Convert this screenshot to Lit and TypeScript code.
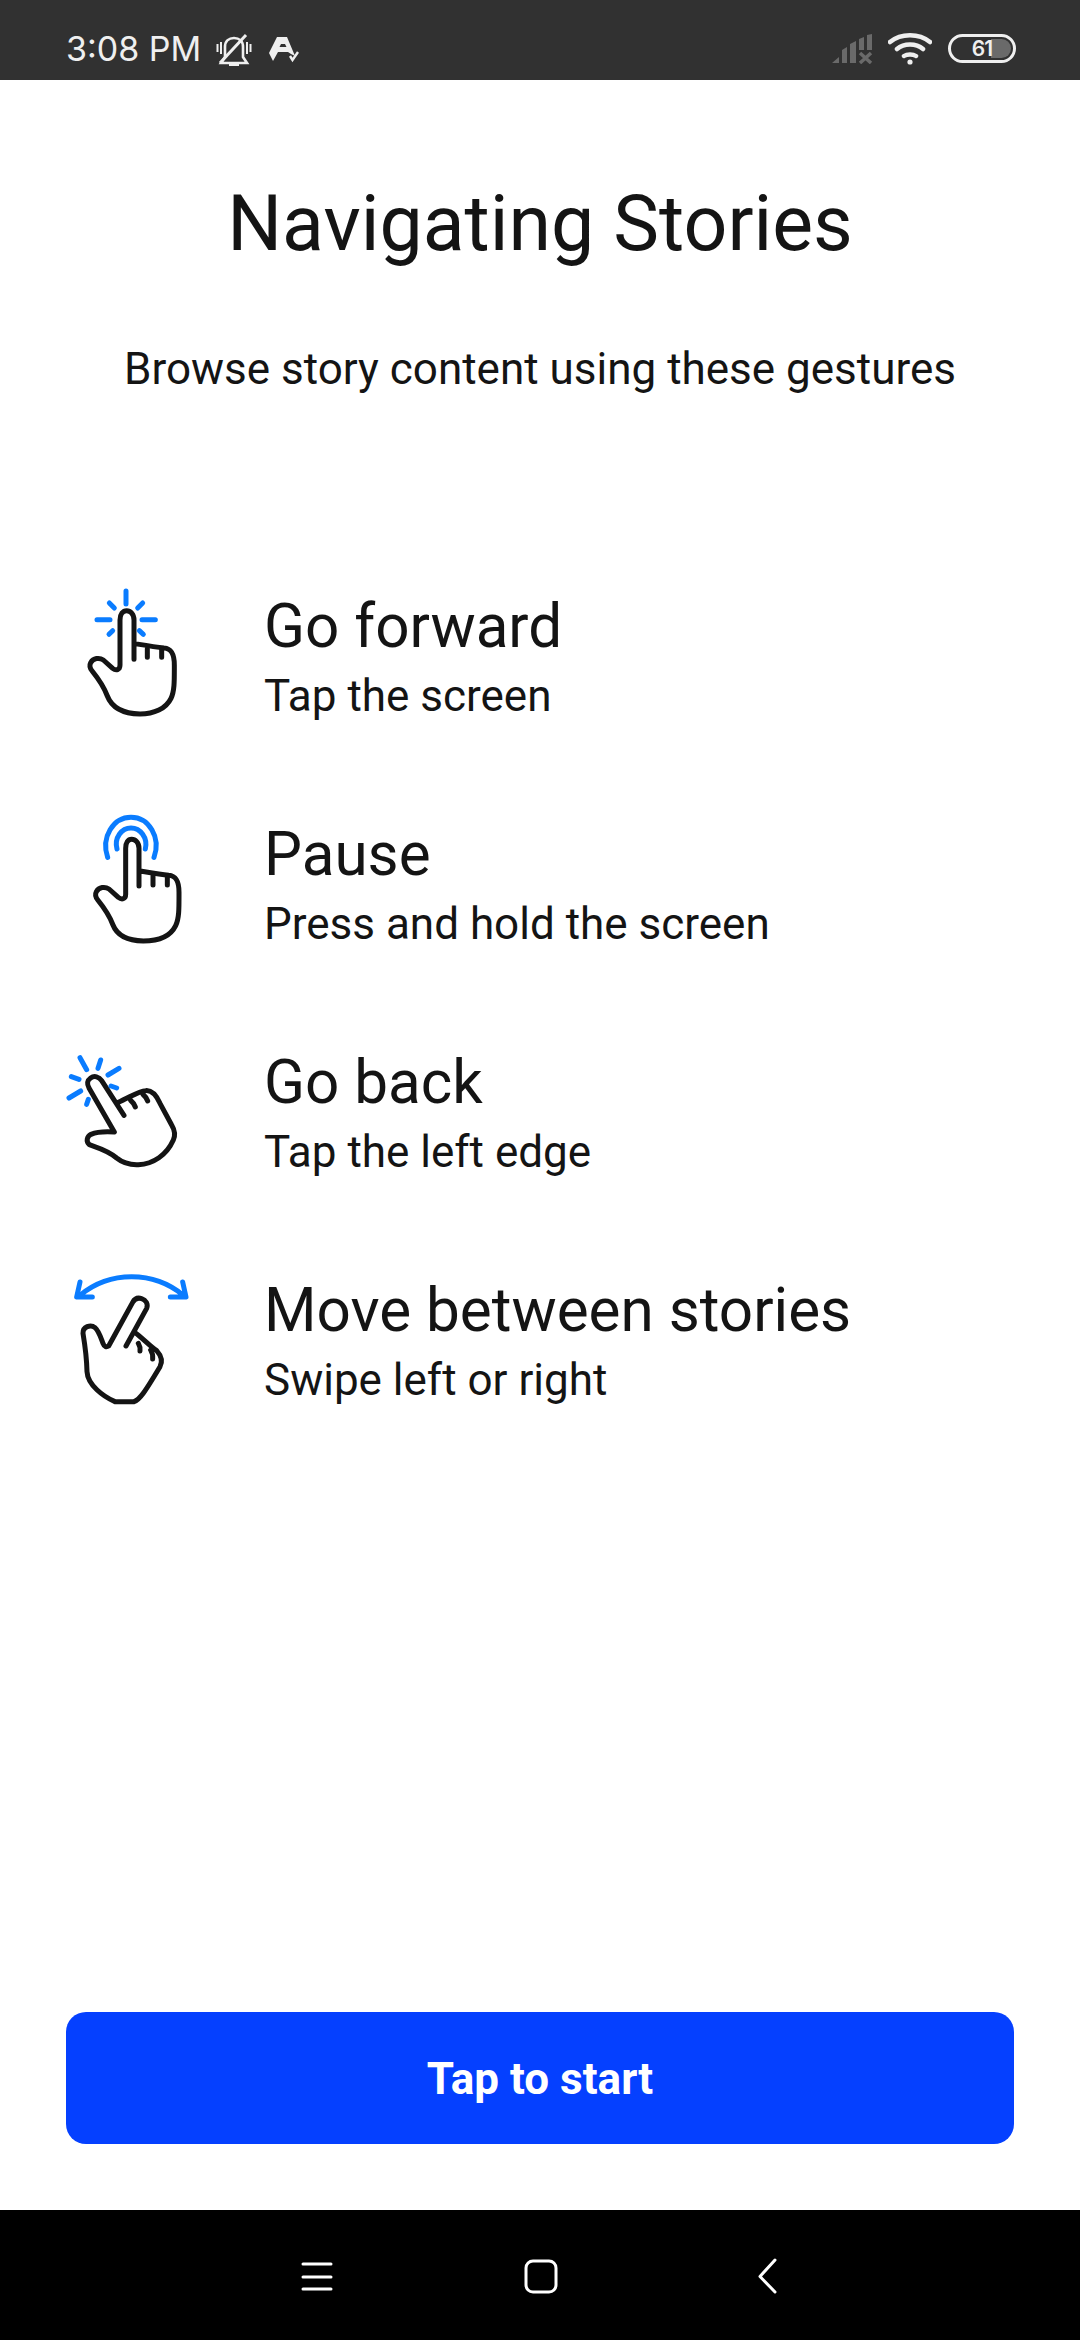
import { LitElement, html, css, svg } from "lit";
import { customElement } from "lit/decorators.js";

const hand1 = svg`<path d="M222 268V150C222 132 211 122 200 122S180 132 180 150V285C180 300 168 303 158 295L130 270C118 262 100 264 92 278C87 287 90 295 97 304C118 330 132 352 142 378C156 414 190 431 240 432C282 432 318 416 333 385C344 362 343 330 343 285C343 252 335 236 312 234C285 231 255 226 224 221"/><path d="M262 236V262M305 236V262"/>`;

const hand2 = svg`<path d="M237 258V145C237 128 226 118 215 118S197 128 197 145V283C197 298 185 300 175 292L147 267C135 259 117 261 109 275C104 284 107 292 114 301C135 327 149 349 159 375C173 411 207 422 250 423C296 423 332 408 347 377C358 354 357 322 357 277C357 244 349 228 326 226C299 223 270 218 239 213"/><path d="M279 228V255M322 228V255"/>`;

const hand3 = svg`<path d="M207 226L140 122C132 110 118 106 107 114S95 130 102 144L178 276C150 274 125 276 108 283C96 289 92 304 103 314C125 322 160 332 185 354C205 370 228 375 250 374C295 372 335 345 355 300C362 285 360 272 350 255L315 190C305 168 290 150 272 152C250 153 225 172 188 188"/><path d="M226 180C233 186 238 193 241 201M263 162C270 168 275 175 278 183"/>`;

const hand4 = svg`<path d="M198 258L260 145C265 132 258 120 245 116C233 112 224 116 218 127L146 258C140 262 133 261 129 250C122 232 116 212 105 203C92 192 68 200 69 220C74 250 80 290 81 335C83 375 130 410 165 425H222C240 418 255 395 300 320C308 305 306 290 290 272C270 258 245 232 222 215"/><path d="M235 250C239 257 241 265 240 273M272 270C277 278 279 287 278 297"/>`;

const rows = [
  {
    t: "Go forward", s: "Tap the screen", vb: "0 0 450 480",
    icon: svg`<g class="ink">${hand1}</g><g class="blue"><path d="M198 63V102M148 99L163 114M248 99L233 114M111 149H150M246 149H286M158 182L147 193M238 182L250 193"/></g>`,
  },
  {
    t: "Pause", s: "Press and hold the screen", vb: "0 -6 450 480",
    icon: svg`<g class="ink">${hand2}</g><g class="blue"><path d="M143 172C122 112 160 52 213 52S304 112 282 172M171 147C162 113 185 84 213 84S264 113 256 147"/></g>`,
  },
  {
    t: "Go back", s: "Tap the left edge", vb: "15 -42 450 480",
    icon: svg`<g class="ink">${hand3}</g><g class="blue"><path d="M75 53L95 89M137 60L129 85M192 85L159 105M49 110L72 118M77 153L42 174M100 178L95 193M168 138L185 144"/></g>`,
  },
  {
    t: "Move between stories", s: "Swipe left or right", vb: "0 -18 450 480",
    icon: svg`<g class="ink">${hand4}</g><g class="blue"><path d="M60 106C150 32 280 32 370 106M60 66L50 111H97M368 66L378 111H331"/></g>`,
  },
];

@customElement("app-root")
export class AppRoot extends LitElement {
  static styles = css`
    :host {
      display: flex;
      flex-direction: column;
      width: 1080px;
      height: 2340px;
      background: #fff;
      font-family: Roboto, "Liberation Sans", sans-serif;
      color: #141414;
      overflow: hidden;
    }
    .status {
      height: 80px;
      flex: none;
      background: #313131;
      display: flex;
      align-items: flex-start;
      color: #efefef;
    }
    .time {
      margin: 29px 0 0 66px;
      font-family: Inter, sans-serif;
      font-weight: 400;
      font-size: 34px;
      line-height: 40px;
      white-space: nowrap;
    }
    .bell { margin: 33px 0 0 15px; }
    .aicon { margin: 37px 0 0 17px; }
    .spacer { flex: 1; }
    .signal { margin-top: 34px; }
    .wifi { margin: 33px 0 0 15px; }
    .battery {
      margin: 34px 64px 0 16px;
      width: 68px;
      height: 29px;
      box-sizing: border-box;
      border: 3px solid #efefef;
      border-radius: 15px;
      position: relative;
      display: flex;
      justify-content: center;
      align-items: center;
      overflow: hidden;
    }
    .level {
      position: absolute;
      right: 2px;
      top: 2px;
      bottom: 2px;
      width: 20px;
      background: #6a6a6a;
      border-radius: 0 10px 10px 0;
    }
    .pct {
      position: relative;
      font-family: Inter, sans-serif;
      font-size: 21px;
      font-weight: 600;
      line-height: 23px;
      color: #efefef;
      letter-spacing: -1px;
    }
    .main { flex: 1; display: flex; flex-direction: column; }
    h1 {
      margin: 0;
      padding-top: 99px;
      font-weight: 400;
      font-size: 77px;
      line-height: 90px;
      text-align: center;
    }
    .sub {
      margin: 0;
      padding-top: 70px;
      font-size: 44px;
      line-height: 60px;
      text-align: center;
    }
    .rows { margin-top: 171px; display: flex; flex-direction: column; padding-left: 60px; }
    .row { display: flex; height: 228px; gap: 54px; }
    .row svg { flex: none; }
    .ink path { fill: none; stroke: #141414; stroke-width: 15; stroke-linecap: round; stroke-linejoin: round; }
    .blue path { fill: none; stroke: #0a7cff; stroke-width: 15; stroke-linecap: round; stroke-linejoin: round; }
    .rt { margin-top: 22px; font-size: 60.2px; line-height: 70px; }
    .rs { font-size: 44px; line-height: 50px; margin-top: 9px; }
    .grow { flex: 1; }
    .btn {
      margin: 0 66px 66px;
      height: 132px;
      padding: 2px 0 0;
      border: 0;
      border-radius: 20px;
      background: #0540ff;
      color: #fff;
      font-family: inherit;
      font-weight: 700;
      font-size: 44px;
      flex: none;
    }
    .nav { height: 130px; flex: none; background: #000; }
    .nav svg { display: block; }
  `;

  render() {
    return html`
      <div class="status">
        <span class="time">3:08 PM</span>
        <svg class="bell" width="36" height="33" viewBox="0 0 36 33" fill="none" stroke="#efefef" stroke-width="2.6">
          <path d="M5 30L9 24V14C9 8 13 5 18 5C23 5 27 8 27 14V24L31 30Z"/>
          <path d="M4 30L30 2" stroke-width="3"/>
          <path d="M1.5 11V19M34.5 11V19M5 9V21M31 9V21" stroke-width="2"/>
          <path d="M13 32H23" stroke-width="2.5"/>
        </svg>
        <svg class="aicon" width="30" height="26" viewBox="0 0 30 26">
          <path fill="#efefef" fill-rule="evenodd" d="M8 0H18L26 19L22 17L19 15H9L4 24L0 16ZM12 7L10.5 10H17.5L16 7Z"/>
          <path d="M21 19L23.5 23L29 15" fill="none" stroke="#efefef" stroke-width="2.4"/>
        </svg>
        <span class="spacer"></span>
        <svg class="signal" width="42" height="30" viewBox="0 0 42 30" fill="#6a6a6a">
          <path d="M1 29L8 23V29ZM11 16L16 13V29H11ZM19 10L25 7V29H19ZM28 5L33 3V16H28ZM36 1L41 0V16H36Z"/>
          <path d="M29 19L40 29M40 19L29 29" fill="none" stroke="#6a6a6a" stroke-width="3.5"/>
        </svg>
        <svg class="wifi" width="44" height="32" viewBox="0 0 44 32" fill="none" stroke="#efefef" stroke-width="4.5" stroke-linecap="round">
          <path d="M2 9C13 0 31 0 42 9M9 16C16 10 28 10 35 16M16 23C19 21 25 21 28 23"/>
          <circle cx="22" cy="29" r="2.6" fill="#efefef" stroke="none"/>
        </svg>
        <div class="battery"><span class="level"></span><span class="pct">61</span></div>
      </div>
      <div class="main">
        <h1>Navigating Stories</h1>
        <p class="sub">Browse story content using these gestures</p>
        <div class="rows">
          ${rows.map(
            (r) => html`<div class="row">
              <svg width="150" height="160" viewBox=${r.vb}>${r.icon}</svg>
              <div>
                <div class="rt">${r.t}</div>
                <div class="rs">${r.s}</div>
              </div>
            </div>`
          )}
        </div>
        <div class="grow"></div>
        <button class="btn">Tap to start</button>
      </div>
      <div class="nav">
        <svg width="1080" height="130" viewBox="0 0 1080 130" fill="none" stroke="#fff" stroke-width="3" stroke-linecap="round" stroke-linejoin="round">
          <path d="M303 54H331M303 67H331M303 79H331"/>
          <rect x="526" y="51" width="30" height="31" rx="7"/>
          <path d="M775 50L760 66.5L775 82"/>
        </svg>
      </div>
    `;
  }
}
